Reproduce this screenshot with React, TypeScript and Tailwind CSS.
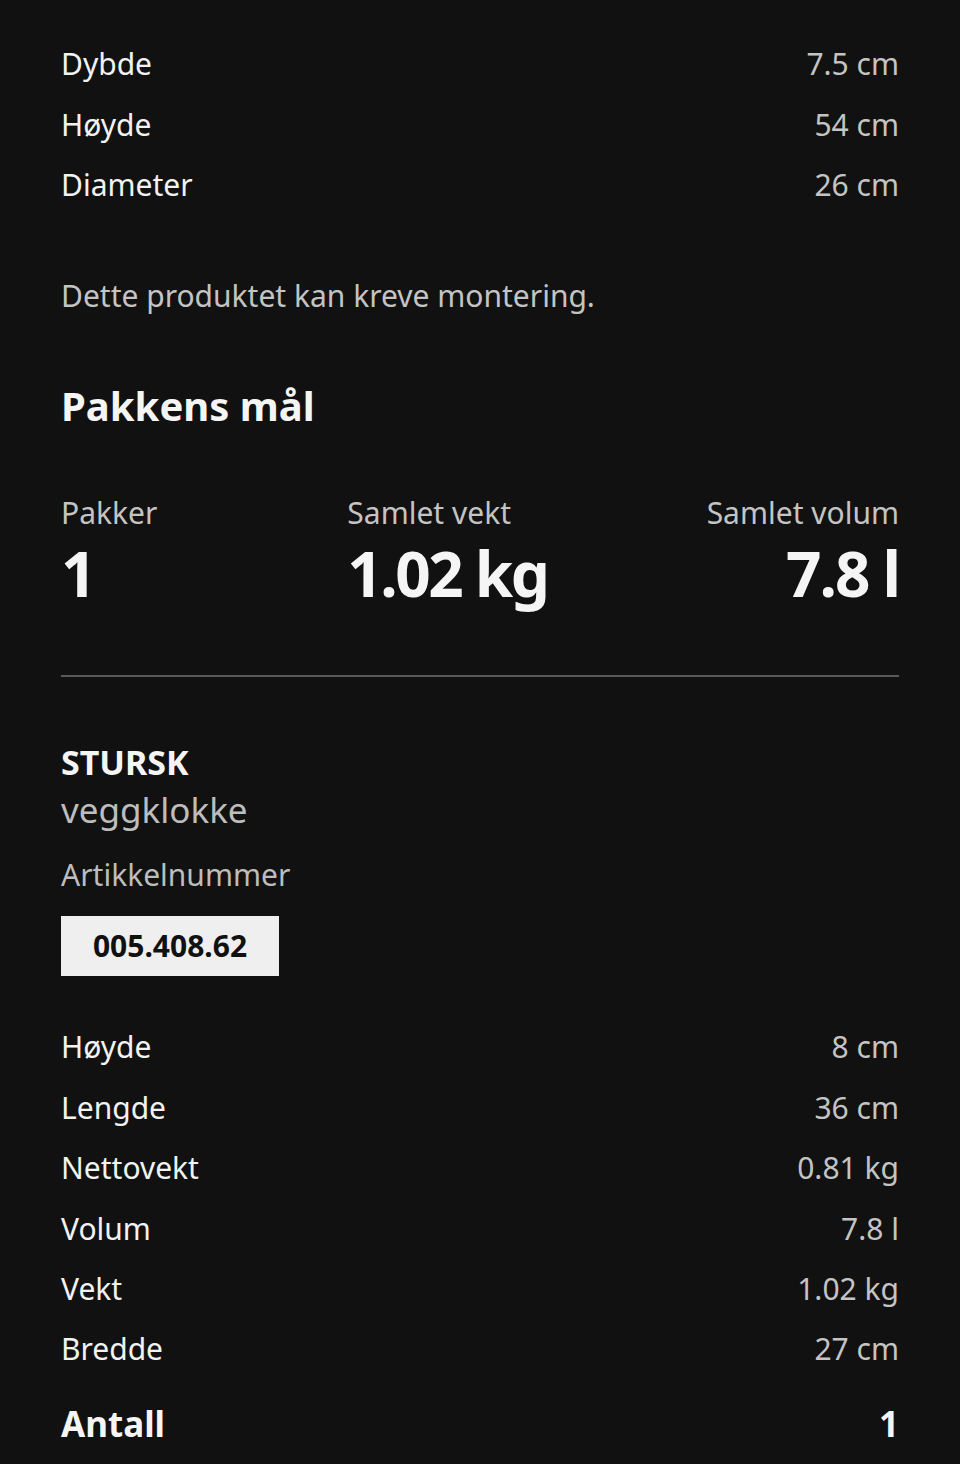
import React from 'react';

const dims = [
  { label: 'Dybde', value: '7.5 cm' },
  { label: 'Høyde', value: '54 cm' },
  { label: 'Diameter', value: '26 cm' },
];

const packDims = [
  { label: 'Høyde', value: '8 cm' },
  { label: 'Lengde', value: '36 cm' },
  { label: 'Nettovekt', value: '0.81 kg' },
  { label: 'Volum', value: '7.8 l' },
  { label: 'Vekt', value: '1.02 kg' },
  { label: 'Bredde', value: '27 cm' },
];

const Row: React.FC<{ label: string; value: string }> = ({ label, value }) => (
  <div className="flex items-center justify-between h-[60.4px]">
    <span className="text-[#f2f2f2]">{label}</span>
    <span className="text-[#c4c4c4]">{value}</span>
  </div>
);

const App: React.FC = () => {
  return (
    <div
      className="min-h-[1464px] w-full bg-[#111111] px-[61px] text-[30px] leading-none"
      style={{ fontFamily: '"Noto Sans", sans-serif' }}
    >
      {/* Product dimensions */}
      <div className="pt-[34px]">
        {dims.map((d) => (
          <Row key={d.label} label={d.label} value={d.value} />
        ))}
      </div>

      <p className="mt-[66px] text-[#c4c4c4]">Dette produktet kan kreve montering.</p>

      <h2 className="mt-[75px] text-[40px] font-bold text-[#f5f5f5]">Pakkens mål</h2>

      {/* Package summary */}
      <div className="mt-[72px] flex justify-between">
        <div className="flex flex-col">
          <span className="text-[#c4c4c4]">Pakker</span>
          <span className="mt-[14px] text-[62px] font-bold tracking-[-2px] text-[#f5f5f5]">1</span>
        </div>
        <div className="flex flex-col mr-auto ml-[190px]">
          <span className="text-[#c4c4c4]">Samlet vekt</span>
          <span className="mt-[14px] text-[62px] font-bold tracking-[-2.5px] text-[#f5f5f5]">1.02 kg</span>
        </div>
        <div className="flex flex-col items-end">
          <span className="text-[#c4c4c4]">Samlet volum</span>
          <span className="mt-[14px] text-[62px] font-bold tracking-[-2px] text-[#f5f5f5]">7.8 l</span>
        </div>
      </div>

      <div className="mt-[71px] h-[2px] bg-[#5a5a5a]" />

      {/* Package item */}
      <div className="mt-[68px] text-[34px] font-bold text-[#f5f5f5]">STURSK</div>
      <div className="mt-[13px] text-[35px] text-[#bdbdbd]">veggklokke</div>
      <div className="mt-[33px] text-[#bdbdbd]">Artikkelnummer</div>
      <div className="mt-[26px] inline-flex h-[60px] w-[218px] items-center justify-center bg-[#efefef] text-[30px] font-bold text-[#111111]">
        005.408.62
      </div>

      <div className="mt-[41px]">
        {packDims.map((d) => (
          <Row key={d.label} label={d.label} value={d.value} />
        ))}
      </div>

      <div className="mt-[14px] flex items-center justify-between h-[60px] text-[35px] font-bold text-[#f5f5f5]">
        <span>Antall</span>
        <span>1</span>
      </div>
    </div>
  );
};

export default App;
